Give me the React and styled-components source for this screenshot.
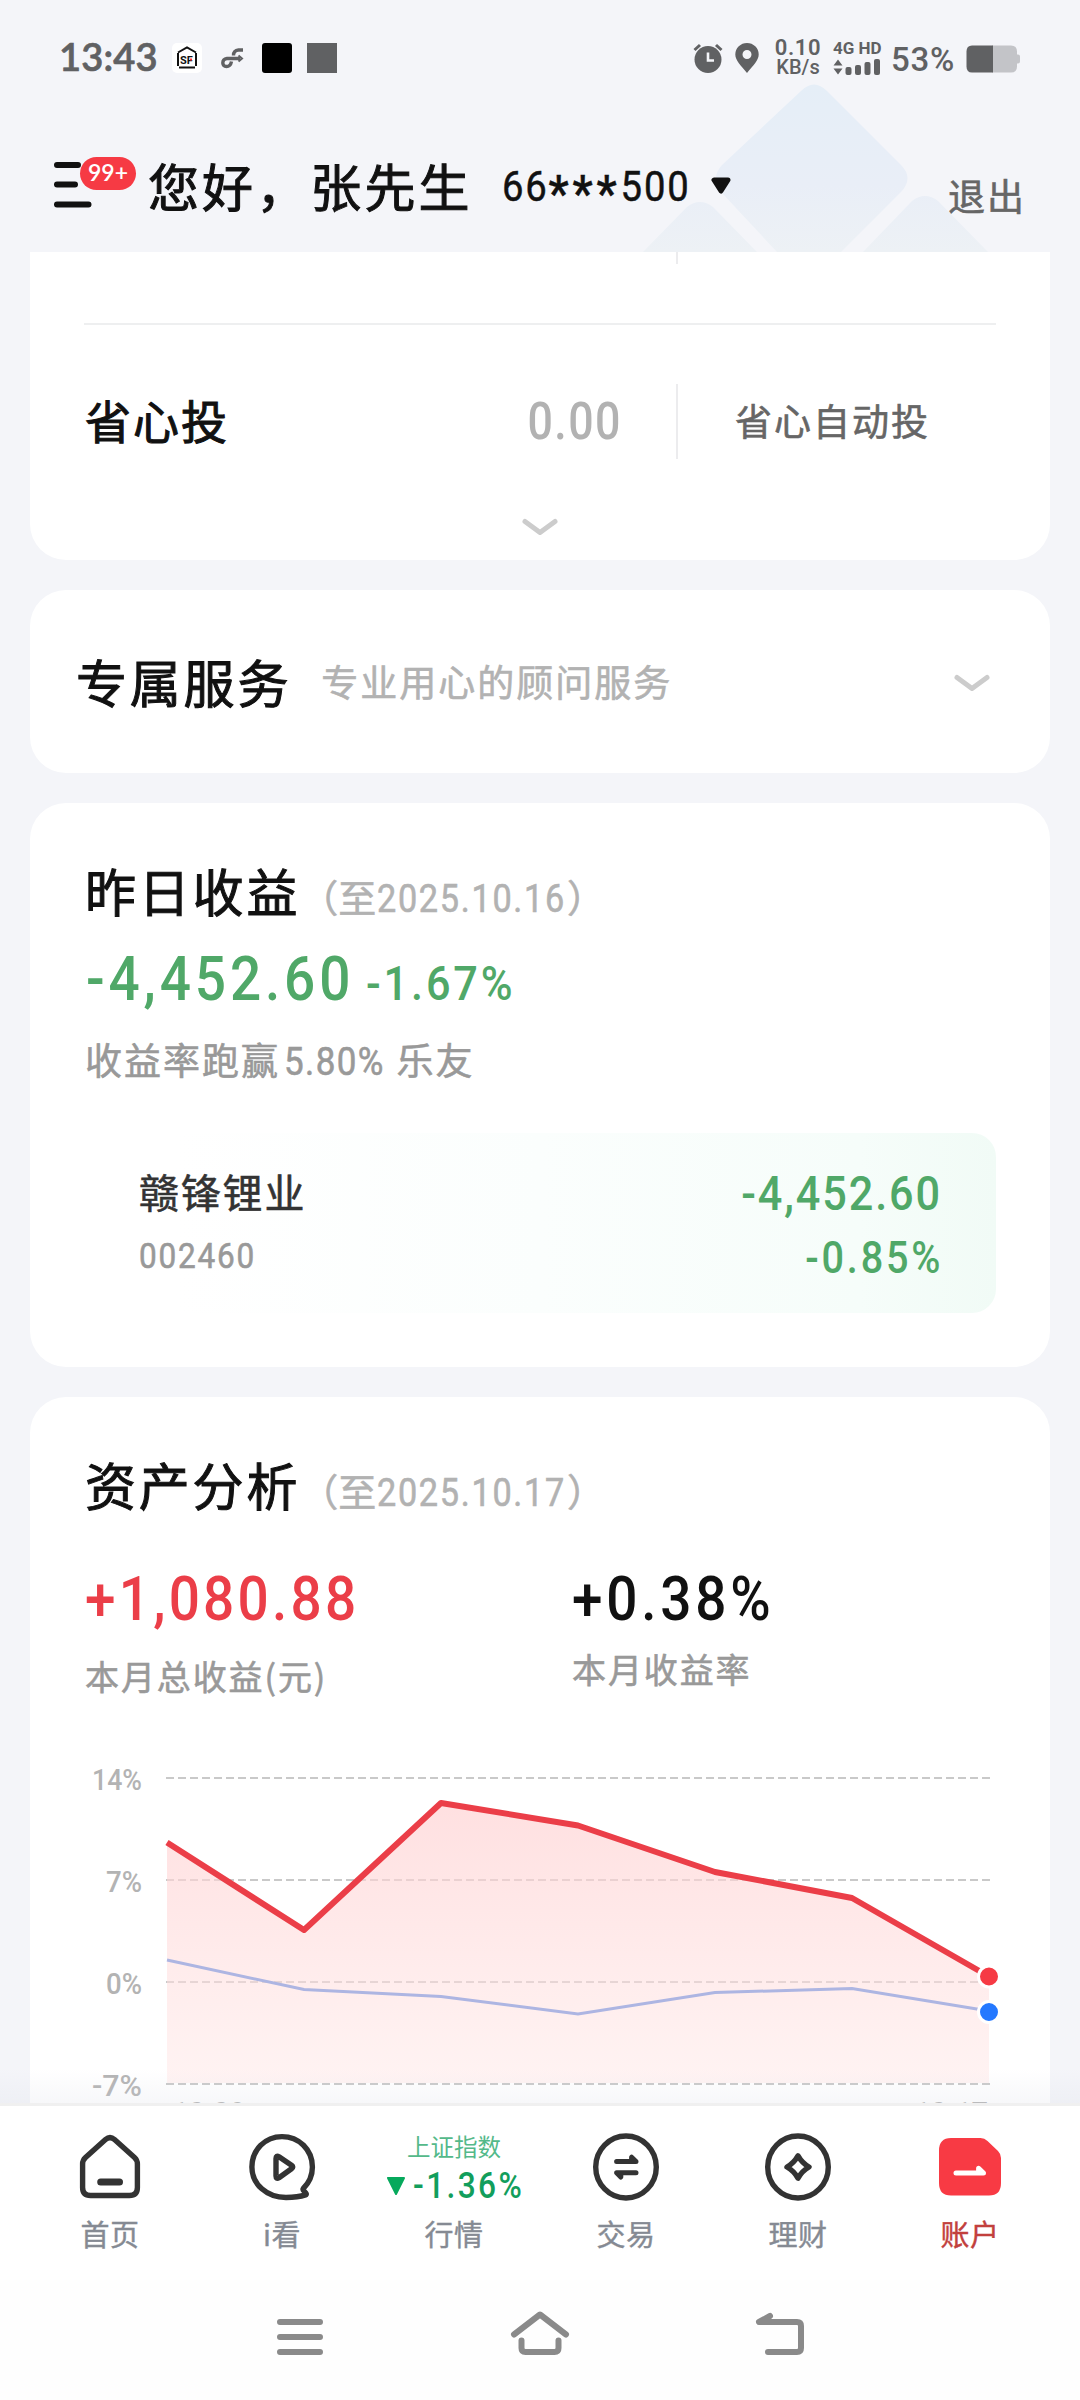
import React from 'react';
import styled, { createGlobalStyle, css } from 'styled-components';

const cjk = `"Noto Sans CJK SC", sans-serif`;
const latin = `Roboto, "Noto Sans CJK SC", sans-serif`;

const GlobalStyle = createGlobalStyle`
  * {
    box-sizing: border-box;
  }
  body {
    margin: 0;
    background: #f4f5f9;
    font-family: ${cjk};
    color: #111;
  }
  svg {
    display: block;
    flex: none;
    overflow: visible;
  }
`;

const Screen = styled.div`
  position: relative;
  width: 1080px;
  height: 2400px;
  overflow: hidden;
  display: flex;
  flex-direction: column;
  background: #f4f5f9;
`;

// faded tiles behind the header
const Backdrop = styled.svg`
  position: absolute;
  left: 600px;
  top: 0;
`;

// a weight between regular and medium
const softBold = css`
  font-weight: 400;
  -webkit-text-stroke: 0.6px currentColor;
`;

const heavy = css`
  font-weight: 400;
  -webkit-text-stroke: 1px currentColor;
`;

/* ---------- numbers ---------- */

// narrow digits, squeezed towards one side so the row still lines up
const Num = styled.span`
  display: inline-block;
  margin: 0 ${props => props.$pull || 0}px 0 ${props => props.$push || 0}px;
  font-family: ${latin};
  font-weight: ${props => props.$weight || 500};
  font-size: ${props => props.$size}px;
  letter-spacing: ${props => props.$gap || 0}px;
  color: ${props => props.$color || 'inherit'};
  white-space: nowrap;
  -webkit-text-stroke: ${props => (props.$weight === 400 ? '0.6px currentColor' : 0)};
  transform: scaleX(${props => props.$squeeze || 0.9});
  transform-origin: ${props => props.$from || 'left'} center;
`;

/* ---------- status bar ---------- */

const StatusBar = styled.div`
  position: relative;
  height: 116px;
  padding: 0 60px 0 59px;
  display: flex;
  justify-content: space-between;
  align-items: center;
  color: #606163;
`;

const StatusSide = styled.div`
  display: flex;
  align-items: center;
`;

const Clock = styled.span`
  width: 113px;
  margin-top: -4px;
  font-family: Lato, sans-serif;
  font-size: 38px;
  font-weight: 600;
  line-height: 40px;
  letter-spacing: 0.2px;
  white-space: nowrap;
  -webkit-text-stroke: 0.7px currentColor;
`;

const AppBadge = styled.div`
  width: 30px;
  height: 30px;
  margin-right: 15px;
  border-radius: ${props => props.$radius || 0}px;
  background: ${props => props.$bg || 'transparent'};
`;

const NetSpeed = styled.div`
  width: 48px;
  margin: 0 11px 0 14px;
  display: flex;
  flex-direction: column;
  align-items: center;
  font-family: Roboto, sans-serif;
  font-weight: 600;
  white-space: nowrap;
`;

const SpeedValue = styled.span`
  margin-top: -3px;
  font-size: 22px;
  line-height: 21px;
  letter-spacing: 0.6px;
`;

const SpeedUnit = styled.span`
  font-size: 20px;
  font-weight: 500;
  line-height: 19px;
`;

const Signal = styled.div`
  width: 48px;
  display: flex;
  flex-direction: column;
  gap: 4px;
`;

const SignalText = styled.span`
  font-family: Roboto, sans-serif;
  font-size: 17px;
  font-weight: 700;
  line-height: 14px;
  white-space: nowrap;
`;

const BatteryText = styled.span`
  width: 75px;
  margin: 4px 0 0 10px;
  font-family: Roboto, sans-serif;
  font-size: 33px;
  font-weight: 500;
  line-height: 40px;
  letter-spacing: 0.8px;
  white-space: nowrap;
`;

/* ---------- header ---------- */

const Header = styled.header`
  position: relative;
  height: 136px;
  padding: 0 54px;
  display: flex;
  align-items: center;
`;

const MenuButton = styled.div`
  position: relative;
  width: 94px;
  height: 46px;
`;

const MenuCount = styled.span`
  position: absolute;
  left: 26px;
  top: -4px;
  width: 56px;
  height: 33px;
  border-radius: 17px;
  background: #f63a44;
  color: #fff;
  font-family: Lato, sans-serif;
  font-size: 23px;
  font-weight: 600;
  line-height: 31px;
  text-align: center;
`;

const Greeting = styled.h1`
  ${heavy}
  width: 354px;
  margin: 2px 0 0;
  font-size: 51px;
  line-height: 64px;
  letter-spacing: 3.1px;
  white-space: nowrap;
`;

const AccountNo = styled.div`
  width: 208px;
  margin-top: 6px;
  font-family: Roboto, sans-serif;
  font-size: 42px;
  line-height: 60px;
  letter-spacing: 2px;
  white-space: nowrap;
  transform: scaleX(0.91);
  transform-origin: left center;
  -webkit-text-stroke: 0.5px currentColor;
`;

const Stars = styled.span`
  font-size: 50px;
  font-weight: 500;
  line-height: 1px;
  letter-spacing: 4.2px;
  vertical-align: -10px;
`;

const Arrow = styled.svg`
  margin-top: 4px;
`;

const Logout = styled.span`
  ${softBold}
  margin: 22px 0 0 auto;
  font-size: 37px;
  line-height: 50px;
  letter-spacing: 2px;
  color: #666;
`;

/* ---------- cards ---------- */

const Content = styled.main`
  position: relative;
  height: 1851px;
  padding: 0 30px;
  display: flex;
  flex-direction: column;
  gap: 30px;
  overflow: hidden;

  &::after {
    content: '';
    position: absolute;
    left: 0;
    right: 0;
    bottom: 0;
    height: 34px;
    background: linear-gradient(to bottom, rgba(225, 227, 238, 0), rgba(215, 217, 228, 0.2));
  }
`;

const Card = styled.section`
  flex: none;
  height: ${props => props.$height}px;
  padding: ${props => props.$pad || '54px'};
  background: #fff;
  border-radius: ${props => (props.$cut ? '0 0 36px 36px' : '36px')};
`;

const CutRow = styled.div`
  height: 73px;
  border-bottom: 2px solid #eeeff0;
`;

const Stub = styled.div`
  width: 2px;
  height: 12px;
  margin-left: 592px;
  background: #ececee;
`;

const PlanRow = styled.div`
  height: 75px;
  margin-top: 59px;
  display: flex;
  align-items: center;
`;

const PlanName = styled.span`
  ${heavy}
  padding-left: 1px;
  font-size: 46px;
  letter-spacing: 2px;
  line-height: 71px;
  height: 75px;
`;

const PlanAmount = styled.div`
  flex: 1;
  height: 75px;
  padding-right: 54px;
  display: flex;
  justify-content: flex-end;
  line-height: 76px;
`;

const PlanAction = styled.span`
  ${softBold}
  width: 320px;
  height: 75px;
  padding-left: 57px;
  border-left: 2px solid #ececee;
  font-size: 37px;
  line-height: 73px;
  letter-spacing: 2px;
  color: #666;
`;

const Expand = styled.div`
  margin-top: 59px;
  display: flex;
  justify-content: center;
`;

const ServiceRow = styled.div`
  height: 100%;
  display: flex;
  align-items: center;
`;

const Title = styled.h2`
  ${heavy}
  margin: 0;
  font-size: 51px;
  line-height: 66px;
  letter-spacing: 2.8px;
  white-space: nowrap;
`;

const ServiceTitle = styled(Title)`
  margin-bottom: 4px;
`;

const ServiceNote = styled.span`
  ${softBold}
  flex: 1;
  margin: 0 0 4px 30px;
  font-size: 37px;
  line-height: 50px;
  letter-spacing: 2px;
  color: #b2b2b2;
`;

const TitleRow = styled.div`
  height: 66px;
  padding-left: 1px;
  display: flex;
  align-items: baseline;
  line-height: 66px;
`;

const AsOf = styled.span`
  ${softBold}
  font-size: 38px;
  line-height: 66px;
  color: #b2b2b2;
  white-space: nowrap;
`;

const ProfitRow = styled.div`
  height: 76px;
  margin-top: 18px;
  padding-left: 2px;
  display: flex;
  align-items: baseline;
  line-height: 76px;
  color: #50a868;
`;

const RankLine = styled.div`
  ${softBold}
  height: 50px;
  margin-top: 17px;
  padding-left: 1px;
  display: flex;
  align-items: baseline;
  font-size: 37px;
  line-height: 50px;
  letter-spacing: 2px;
  color: #999;
  white-space: nowrap;
`;

const Holding = styled.div`
  height: 180px;
  margin-top: 49px;
  padding: 29px 55px 24px 55px;
  border-radius: 0 24px 24px 0;
  background: linear-gradient(to right, #fff 10%, #fbfefd 50%, #f6fdfa 85%, #f1fbf6);
  display: flex;
  justify-content: space-between;
`;

const HoldingSide = styled.div`
  display: flex;
  flex-direction: column;
  align-items: ${props => (props.$right ? 'flex-end' : 'flex-start')};
  line-height: 64px;
`;

const StockName = styled.span`
  ${softBold}
  height: 68px;
  font-size: 40px;
  line-height: 59px;
  letter-spacing: 1.8px;
  color: #333;
`;

const Stats = styled.div`
  height: 138px;
  margin-top: 44px;
  padding-left: 1px;
  display: grid;
  grid-template-columns: 487px 1fr;
`;

const Stat = styled.div`
  display: flex;
  flex-direction: column;
  align-items: flex-start;
  gap: ${props => props.$gap}px;
  line-height: 76px;
`;

const StatLabel = styled.span`
  ${softBold}
  font-size: 34px;
  line-height: 44px;
  letter-spacing: 1.9px;
  color: #999;
  white-space: nowrap;
`;

const Chart = styled.svg`
  margin: 41px 0 0 -85px;
  font-family: Roboto, sans-serif;
  font-size: 29px;
  font-weight: 500;
  fill: #b3b3b3;
`;

/* ---------- bottom bars ---------- */

const TabBar = styled.nav`
  position: relative;
  height: 177px;
  padding: 0 24px;
  border-top: 3px solid #f0f0f0;
  background: #fff;
  display: grid;
  grid-template-columns: repeat(6, 1fr);
`;

const Tab = styled.div`
  display: flex;
  flex-direction: column;
  align-items: center;
  padding-top: 27px;
`;

const TabIcon = styled.div`
  height: 68px;
  display: flex;
  flex-direction: column;
  align-items: center;
`;

const TabLabel = styled.span`
  margin-top: 10px;
  font-size: 29px;
  line-height: 44px;
  letter-spacing: 0.6px;
  -webkit-text-stroke: 0.4px currentColor;
  color: ${props => (props.$active ? '#c2403d' : '#858a93')};
`;

const IndexName = styled.span`
  margin-top: -5px;
  font-size: 23.5px;
  line-height: 36px;
  color: #54b98a;
`;

const IndexMove = styled.div`
  display: flex;
  align-items: center;
  gap: 7px;
  margin-top: 3px;
  line-height: 38px;
`;

const SystemNav = styled.div`
  flex: 1;
  background: #fefefe;
`;

const SystemKeys = styled.div`
  height: 112px;
  padding: 0 276px;
  display: flex;
  align-items: center;
  justify-content: space-between;
`;

const Chevron = () => (
  <svg width="36" height="18" viewBox="0 0 36 18" fill="none" stroke="#ccc" strokeWidth="5" strokeLinecap="round" strokeLinejoin="round">
    <path d="M3 3.5L18 14.5L33 3.5" />
  </svg>
);

const gridLines = [
  { label: '14%', y: 38 },
  { label: '7%', y: 140 },
  { label: '0%', y: 242 },
  { label: '-7%', y: 344 },
];

const xs = [168, 305, 442, 579, 716, 853, 990];
const mine = [102.5, 190, 63, 85.5, 132, 158, 236.5];
const market = [220, 249.5, 256.5, 274, 252.5, 248.5, 271];

const toPoints = ys => ys.map((y, i) => `${xs[i]},${y}`).join(' ');

const ProfitChart = () => (
  <Chart width="1050" height="400" viewBox="0 0 1050 400">
    <defs>
      <linearGradient id="area" x1="0" y1="63" x2="0" y2="344" gradientUnits="userSpaceOnUse">
        <stop offset="0" stopColor="#ffcfd0" stopOpacity="0.65" />
        <stop offset="1" stopColor="#ffe7e6" stopOpacity="0.5" />
      </linearGradient>
    </defs>
    {gridLines.map(line => (
      <g key={line.label}>
        <text x="143" y={line.y + 12} textAnchor="end" textLength={line.label.length === 3 ? 50 : 36} lengthAdjust="spacingAndGlyphs">
          {line.label}
        </text>
        <line x1="167" x2="991" y1={line.y} y2={line.y} stroke="#c9c9c9" strokeWidth="2" strokeDasharray="8 4" />
      </g>
    ))}
    <polygon points={`${toPoints(mine)} 990,343 168,343`} fill="url(#area)" />
    <polyline points={toPoints(market)} fill="none" stroke="#adb5e2" strokeWidth="3" />
    <polyline points={toPoints(mine)} fill="none" stroke="#eb3e48" strokeWidth="6" strokeLinejoin="round" />
    <circle cx="990" cy="236.5" r="10.5" fill="#f63a44" stroke="#fff" strokeWidth="3" />
    <circle cx="990" cy="272" r="10.5" fill="#2478ff" stroke="#fff" strokeWidth="3" />
    <text x="173" y="383">10.09</text>
    <text x="989" y="383" textAnchor="end">10.17</text>
  </Chart>
);

const ink = { fill: 'none', stroke: '#333', strokeWidth: 5.4, strokeLinecap: 'round', strokeLinejoin: 'round' };

const HomeIcon = () => (
  <svg width="68" height="68" viewBox="0 0 68 68" {...ink}>
    <path d="M29.5 6.6Q34 2.6 38.5 6.6L58.5 24.5Q61.4 27.2 61.4 31V54.5Q61.4 62.5 53.4 62.5H14.6Q6.6 62.5 6.6 54.5V31Q6.6 27.2 9.5 24.5Z" />
    <path d="M24.7 49H43.5" strokeWidth="7" />
  </svg>
);

const WatchIcon = () => (
  <svg width="68" height="68" viewBox="0 0 68 68" {...ink}>
    <path d="M55.3 55.5C60.5 50.3 64.4 43 64.4 34C64.4 16.5 50.8 3.6 34 3.6C17 3.6 3.9 17 3.9 34C3.9 51.5 19 64.5 38 64.5C45.5 64.5 52 63.8 57.5 61.9C59.2 61.2 57.8 60 56.2 58.4C55.3 57.5 54.6 56.5 55.3 55.5Z" />
    <path d="M28 25.5Q28 22 31 23.8L43.5 32.2Q46 34 43.5 35.8L31 44.7Q28 46.5 28 43Z" />
  </svg>
);

const TradeIcon = () => (
  <svg width="68" height="68" viewBox="0 0 68 68" {...ink}>
    <ellipse cx="34" cy="34" rx="30.3" ry="31" />
    <path d="M24.6 28.6H44L39.6 24.2V28" strokeWidth="5" />
    <path d="M44 39.7H24.6L28.8 44V40" strokeWidth="5" />
  </svg>
);

const WealthIcon = () => (
  <svg width="68" height="68" viewBox="0 0 68 68" {...ink}>
    <ellipse cx="34" cy="34" rx="30.3" ry="31" />
    <path d="M34 22.8Q38 30 45 34Q38 38 34 45.2Q30 38 23 34Q30 30 34 22.8Z" />
  </svg>
);

const AccountIcon = () => (
  <svg width="68" height="68" viewBox="0 0 68 68">
    <path d="M15 5H44.5Q48.5 5 51.5 8L62 18Q65 21 65 25V50Q65 62.5 53 62.5H15Q3 62.5 3 50V17.5Q3 5 15 5Z" fill="#f83a44" />
    <path d="M20 40H47.5L42.6 35.3V39.3" fill="none" stroke="#fff" strokeWidth="5" strokeLinecap="round" strokeLinejoin="round" />
  </svg>
);

const tabs = [
  { label: '首页', icon: <HomeIcon /> },
  { label: 'i看', icon: <WatchIcon /> },
  {
    label: '行情',
    icon: (
      <>
        <IndexName>上证指数</IndexName>
        <IndexMove>
          <svg width="20" height="20" viewBox="0 0 20 20">
            <path d="M2 2H18L10 18Z" fill="#06a95c" stroke="#06a95c" strokeWidth="2" strokeLinejoin="round" />
          </svg>
          <Num $size={36} $gap={2.7} $squeeze={0.88} $pull={-17} $color="#129e5c">-1.36%</Num>
        </IndexMove>
      </>
    ),
  },
  { label: '交易', icon: <TradeIcon /> },
  { label: '理财', icon: <WealthIcon /> },
  { label: '账户', icon: <AccountIcon />, active: true },
];

function App() {
  return (
    <Screen>
      <GlobalStyle />
      <Backdrop width="480" height="252" viewBox="600 0 480 252">
        <defs>
          <linearGradient id="tile" x1="0" y1="84" x2="0" y2="252" gradientUnits="userSpaceOnUse">
            <stop offset="0" stopColor="#e5eef7" />
            <stop offset="0.6" stopColor="#e9eef7" />
            <stop offset="1" stopColor="#edf1f5" />
          </linearGradient>
        </defs>
        <g fill="url(#tile)">
          <path d="M801 91Q814 78 827 91L901 165Q914 178 901 192L841 252H777L722 193Q710 178 722 165Z" />
          <path d="M687 207Q700 197 713 207L757 252H643Z" />
          <path d="M912 201Q925 191 938 201L988 252H863Z" />
        </g>
      </Backdrop>

      <StatusBar>
        <StatusSide>
          <Clock>13:43</Clock>
          <AppBadge $bg="#fff" $radius={5}>
            <svg width="30" height="30" viewBox="0 0 30 30" fill="none" stroke="#111" strokeWidth="2">
              <path d="M6 9.5L15 4.5L24 9.5M6 10V23M24 10V23M7 24.5H23" />
              <text x="14.5" y="20.5" textAnchor="middle" fontFamily="Roboto, sans-serif" fontWeight="700" fontSize="11" fill="#111" stroke="none">SF</text>
              <path d="M18 16.5H20" stroke="#f33" />
            </svg>
          </AppBadge>
          <AppBadge>
            <svg width="30" height="30" viewBox="0 0 30 30" fill="none" stroke="#606163" strokeWidth="3.4">
              <path d="M26 7H21.5Q16.500 7.5 16.5 12.500M23 15.5H10Q5.800 16 5.800 20Q6 23.500 9.500 23.500Q13.500 23.500 14.500 18.500" />
              <path d="M21.5 12.5L25 15.5L21.5 18.5" strokeWidth="2" />
            </svg>
          </AppBadge>
          <AppBadge $bg="#000" $radius={3} />
          <AppBadge $bg="#606163" />
        </StatusSide>
        <StatusSide>
          <svg width="30" height="30" viewBox="0 0 30 30">
            <circle cx="15" cy="16.5" r="13.5" fill="#606163" />
            <path d="M1.5 7L7 2M28.5 7L23 2" stroke="#606163" strokeWidth="3" />
            <path d="M15 9.5V17.5H21" fill="none" stroke="#f4f5f9" strokeWidth="2.6" />
          </svg>
          <svg width="37" height="30" viewBox="-11 0 37 30">
            <path fillRule="evenodd" fill="#606163" d="M13 30C7 22.5 1.3 17.5 1.3 11.5A11.7 11.5 0 0 1 24.7 11.5C24.7 17.5 19 22.5 13 30ZM13 7A4.5 4.5 0 1 0 13 16A4.5 4.5 0 1 0 13 7Z" />
          </svg>
          <NetSpeed>
            <SpeedValue>0.10</SpeedValue>
            <SpeedUnit>KB/s</SpeedUnit>
          </NetSpeed>
          <Signal>
            <SignalText>4G HD</SignalText>
            <svg width="48" height="16" viewBox="0 0 48 16" fill="#606163">
              <path d="M0.5 6.5L5 0.5L9.5 6.5ZM0.5 9.5L5 15.5L9.5 9.5Z" />
              <rect x="12.5" y="8" width="6" height="8" rx="2" />
              <rect x="22" y="6" width="6" height="10" rx="2" />
              <rect x="31.5" y="3" width="6" height="13" rx="2" />
              <rect x="41" y="0" width="6" height="16" rx="2" />
            </svg>
          </Signal>
          <BatteryText>53%</BatteryText>
          <svg width="54" height="28" viewBox="0 -1 54 28">
            <path d="M26 0.5H45Q51 0.5 51 6.5V9.5H52Q54 9.5 54 11.5V16.5Q54 18.5 52 18.5H51V21.5Q51 27.5 45 27.5H26Z" fill="#c3c4c8" />
            <path d="M27 0.5H6Q0.5 0.5 0.5 6.5V21.5Q0.5 27.5 6 27.5H27Z" fill="#606163" />
          </svg>
        </StatusSide>
      </StatusBar>

      <Header>
        <MenuButton>
          <svg width="38" height="46" viewBox="0 0 38 46" stroke="#111" strokeWidth="6" strokeLinecap="round">
            <path d="M3 4H24M3 23.5H21M3 43.5H34.5" />
          </svg>
          <MenuCount>99+</MenuCount>
        </MenuButton>
        <Greeting>您好，张先生</Greeting>
        <AccountNo>
          66<Stars>***</Stars>500
        </AccountNo>
        <Arrow width="22" height="18" viewBox="0 0 22 18">
          <path d="M4 3H18L11 14Z" fill="#111" stroke="#111" strokeWidth="5" strokeLinejoin="round" />
        </Arrow>
        <Logout>退出</Logout>
      </Header>

      <Content>
        <Card $height={308} $pad="0 54px" $cut>
          <CutRow>
            <Stub />
          </CutRow>
          <PlanRow>
            <PlanName>省心投</PlanName>
            <PlanAmount>
              <Num $size={52} $gap={1.7} $squeeze={0.86} $from="right" $color="#b2b2b2">0.00</Num>
            </PlanAmount>
            <PlanAction>省心自动投</PlanAction>
          </PlanRow>
          <Expand>
            <Chevron />
          </Expand>
        </Card>

        <Card $height={183} $pad="2px 60px 0 46px">
          <ServiceRow>
            <ServiceTitle>专属服务</ServiceTitle>
            <ServiceNote>专业用心的顾问服务</ServiceNote>
            <Chevron />
          </ServiceRow>
        </Card>

        <Card $height={564}>
          <TitleRow>
            <Title>昨日收益</Title>
            <AsOf>
              （至<Num $size={38} $weight={400} $gap={1.9} $push={1} $pull={-20}>2025.10.16</Num>）
            </AsOf>
          </TitleRow>
          <ProfitRow>
            <Num $size={61} $gap={4.3} $pull={-18}>-4,452.60</Num>
            <Num $size={48} $gap={3.2}>-1.67%</Num>
          </ProfitRow>
          <RankLine>
            收益率跑赢
            <Num $size={38} $weight={400} $gap={1.5} $squeeze={0.92} $push={4} $pull={3}>5.80%</Num>
            乐友
          </RankLine>
          <Holding>
            <HoldingSide>
              <StockName>赣锋锂业</StockName>
              <Num $size={35} $weight={400} $gap={2} $color="#999">002460</Num>
            </HoldingSide>
            <HoldingSide $right>
              <Num $size={48} $gap={2.1} $from="right" $pull={-1} $color="#50a868">-4,452.60</Num>
              <Num $size={44} $gap={3.1} $from="right" $pull={-2} $color="#50a868">-0.85%</Num>
            </HoldingSide>
          </Holding>
        </Card>

        <Card $height={780}>
          <TitleRow>
            <Title>资产分析</Title>
            <AsOf>
              （至<Num $size={38} $weight={400} $gap={1.9} $push={1} $pull={-20}>2025.10.17</Num>）
            </AsOf>
          </TitleRow>
          <Stats>
            <Stat $gap={17}>
              <Num $size={61} $gap={3.6} $color="#eb3e48">+1,080.88</Num>
              <StatLabel>本月总收益(元)</StatLabel>
            </Stat>
            <Stat $gap={10}>
              <Num $size={61} $gap={4.2}>+0.38%</Num>
              <StatLabel>本月收益率</StatLabel>
            </Stat>
          </Stats>
          <ProfitChart />
        </Card>
      </Content>

      <TabBar>
        {tabs.map(tab => (
          <Tab key={tab.label}>
            <TabIcon>{tab.icon}</TabIcon>
            <TabLabel $active={tab.active}>{tab.label}</TabLabel>
          </Tab>
        ))}
      </TabBar>

      <SystemNav>
        <SystemKeys>
          <svg width="48" height="44" viewBox="0 0 48 44" fill="none" stroke="#8a8a8a" strokeWidth="6" strokeLinecap="round">
            <path d="M4 8H44M4 23H44M4 38H44" />
          </svg>
          <svg width="60" height="44" viewBox="0 0 60 44" fill="none" stroke="#8a8a8a" strokeWidth="6" strokeLinecap="round" strokeLinejoin="round">
            <path d="M4 20.5L30 0.5L56 20.5M11.5 26.5V34Q11.5 38 15.5 38H44.5Q48.5 38 48.5 34V26.5" />
          </svg>
          <svg width="48" height="44" viewBox="0 0 48 44" fill="none" stroke="#8a8a8a" strokeWidth="6" strokeLinecap="round" strokeLinejoin="round">
            <path d="M14 2L3 8H41Q45 8 45 12V34Q45 38 41 38H12" />
          </svg>
        </SystemKeys>
      </SystemNav>
    </Screen>
  );
}

export default App;
